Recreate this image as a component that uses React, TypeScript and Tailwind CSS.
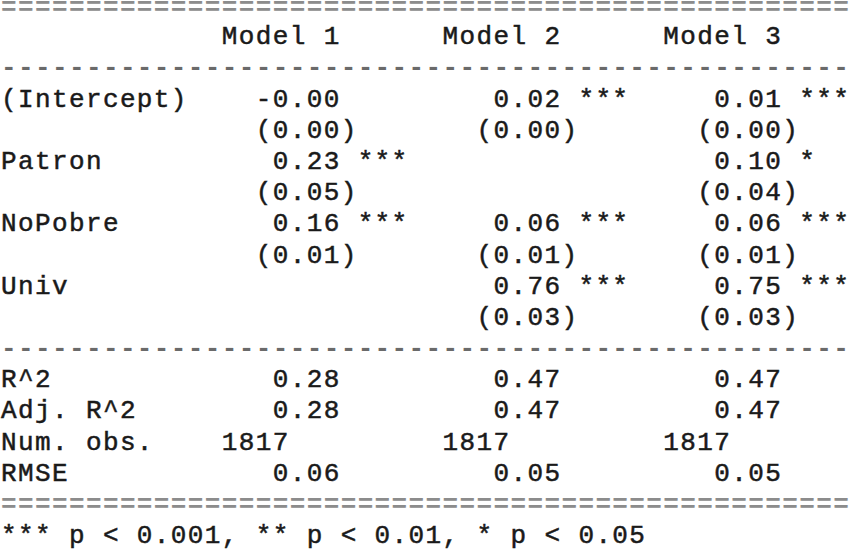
import React from "react";

const pad = (s: string, n: number) => s + " ".repeat(Math.max(0, n - s.length));

function row(cells: [number, string][]): string {
  let out = "";
  for (const [col, txt] of cells) {
    out = pad(out, col) + txt;
  }
  return out;
}

type Line = { text: string; kind: "eq" | "dash" | "text" };

const lines: Line[] = [
  { text: "=".repeat(50), kind: "eq" },
  { text: row([[13, "Model 1"], [26, "Model 2"], [39, "Model 3"]]), kind: "text" },
  { text: "-".repeat(50), kind: "dash" },
  { text: row([[0, "(Intercept)"], [15, "-0.00"], [29, "0.02 ***"], [42, "0.01 ***"]]), kind: "text" },
  { text: row([[15, "(0.00)"], [28, "(0.00)"], [41, "(0.00)"]]), kind: "text" },
  { text: row([[0, "Patron"], [16, "0.23 ***"], [42, "0.10 *"]]), kind: "text" },
  { text: row([[15, "(0.05)"], [41, "(0.04)"]]), kind: "text" },
  { text: row([[0, "NoPobre"], [16, "0.16 ***"], [29, "0.06 ***"], [42, "0.06 ***"]]), kind: "text" },
  { text: row([[15, "(0.01)"], [28, "(0.01)"], [41, "(0.01)"]]), kind: "text" },
  { text: row([[0, "Univ"], [29, "0.76 ***"], [42, "0.75 ***"]]), kind: "text" },
  { text: row([[28, "(0.03)"], [41, "(0.03)"]]), kind: "text" },
  { text: "-".repeat(50), kind: "dash" },
  { text: row([[0, "R^2"], [16, "0.28"], [29, "0.47"], [42, "0.47"]]), kind: "text" },
  { text: row([[0, "Adj. R^2"], [16, "0.28"], [29, "0.47"], [42, "0.47"]]), kind: "text" },
  { text: row([[0, "Num. obs."], [13, "1817"], [26, "1817"], [39, "1817"]]), kind: "text" },
  { text: row([[0, "RMSE"], [16, "0.06"], [29, "0.05"], [42, "0.05"]]), kind: "text" },
  { text: "=".repeat(50), kind: "eq" },
  { text: "*** p < 0.001, ** p < 0.01, * p < 0.05", kind: "text" },
];

export default function App() {
  return (
    <div className="w-[850px] h-[552px] overflow-hidden bg-white">
      <div
        className="pl-[1px] text-[26px] tracking-[1.38px] leading-[31.2px] whitespace-pre"
        style={{ fontFamily: '"Liberation Mono", "DejaVu Sans Mono", monospace' }}
      >
        {lines.map((l, i) => {
          const base =
            i === 0 ? "h-[22.2px] leading-[16px]" : "h-[31.2px]";
          const tone =
            l.kind === "eq"
              ? "font-bold text-[#8c8c8c]"
              : l.kind === "dash"
              ? "font-bold text-[#6a6a6a]"
              : "text-[#1a1a1a] [-webkit-text-stroke:0.5px_#1a1a1a]";
          return (
            <div key={i} className={base + " " + tone}>
              {l.text}
            </div>
          );
        })}
      </div>
    </div>
  );
}
